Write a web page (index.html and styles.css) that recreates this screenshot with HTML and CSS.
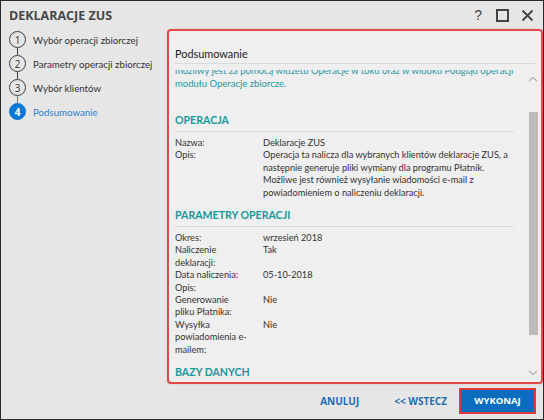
FILE: index.html
```html
<!DOCTYPE html>
<html lang="pl">
<head>
<meta charset="utf-8">
<title>Deklaracje ZUS</title>
<link rel="stylesheet" href="styles.css">
</head>
<body>
<div class="window">
  <header class="titlebar">
    <h1 class="title">DEKLARACJE ZUS</h1>
    <div class="controls">
      <span class="ctl help">?</span>
      <svg class="ctl" width="13" height="13" viewBox="0 0 13 13"><rect x="1" y="1" width="11" height="11" fill="none" stroke="#444" stroke-width="2"/></svg>
      <svg class="ctl" width="13" height="13" viewBox="0 0 13 13"><path d="M1.5 1.5 L11.5 11.5 M11.5 1.5 L1.5 11.5" stroke="#444" stroke-width="1.8"/></svg>
    </div>
  </header>
  <div class="main">
    <nav class="steps">
      <div class="step"><span class="num">1</span><span class="label">Wybór operacji zbiorczej</span></div>
      <div class="link"></div>
      <div class="step"><span class="num">2</span><span class="label">Parametry operacji zbiorczej</span></div>
      <div class="link"></div>
      <div class="step"><span class="num">3</span><span class="label">Wybór klientów</span></div>
      <div class="link active"></div>
      <div class="step active"><span class="num">4</span><span class="label">Podsumowanie</span></div>
    </nav>
    <section class="panel">
      <div class="panel-head">Podsumowanie</div>
      <div class="panel-body">
        <div class="scroll">
          <div class="content">
            <p class="note">możliwy jest za pomocą widżetu Operacje w toku oraz w widoku Podgląd operacji modułu Operacje zbiorcze.</p>
            <h2 class="sec">OPERACJA</h2>
            <div class="row"><span class="k">Nazwa:</span><span class="v">Deklaracje ZUS</span></div>
            <div class="row"><span class="k">Opis:</span><span class="v">Operacja ta nalicza dla wybranych klientów deklaracje ZUS, a następnie generuje pliki wymiany dla programu Płatnik. Możliwe jest również wysyłanie wiadomości e-mail z powiadomieniem o naliczeniu deklaracji.</span></div>
            <h2 class="sec">PARAMETRY OPERACJI</h2>
            <div class="row"><span class="k">Okres:</span><span class="v">wrzesień 2018</span></div>
            <div class="row"><span class="k">Naliczenie deklaracji:</span><span class="v">Tak</span></div>
            <div class="row"><span class="k">Data naliczenia:</span><span class="v">05-10-2018</span></div>
            <div class="row"><span class="k">Opis:</span><span class="v"></span></div>
            <div class="row"><span class="k">Generowanie <span class="nw">pliku Płatnika:</span></span><span class="v">Nie</span></div>
            <div class="row"><span class="k">Wysyłka powiadomienia e-mailem:</span><span class="v">Nie</span></div>
            <h2 class="sec">BAZY DANYCH</h2>
          </div>
        </div>
        <div class="scrollbar">
          <svg class="arrow" width="10" height="6" viewBox="0 0 10 6"><path d="M1 5 L5 1.5 L9 5" fill="none" stroke="#b5b5b5" stroke-width="1.2"/></svg>
          <div class="track"><div class="thumb"></div></div>
          <svg class="arrow" width="10" height="6" viewBox="0 0 10 6"><path d="M1 1 L5 4.5 L9 1" fill="none" stroke="#b5b5b5" stroke-width="1.2"/></svg>
        </div>
      </div>
    </section>
  </div>
  <footer class="footer">
    <button class="btn link-btn">ANULUJ</button>
    <button class="btn link-btn">&lt;&lt; WSTECZ</button>
    <button class="btn primary">WYKONAJ</button>
  </footer>
</div>
</body>
</html>
```

FILE: styles.css
```css
* { box-sizing: border-box; }
html, body { margin: 0; padding: 0; }
body {
  width: 544px;
  height: 420px;
  font-family: "Lato", "Open Sans", sans-serif;
  font-size: 10px;
  color: #333;
  background: #e6e6e6;
}
.window {
  width: 544px;
  height: 420px;
  border: 1px solid #2a2a2a;
  background: #e6e6e6;
  display: flex;
  flex-direction: column;
}
.titlebar {
  height: 28px;
  display: flex;
  align-items: center;
  justify-content: space-between;
  padding: 0 9px 0 8px;
}
.title {
  margin: 0;
  font-family: "Open Sans", sans-serif;
  font-size: 12.5px;
  font-weight: 700;
  color: #474747;
}
.controls {
  display: flex;
  align-items: center;
  gap: 12px;
}
.help {
  font-size: 14px;
  color: #444;
  line-height: 13px;
  font-family: "Liberation Sans", sans-serif;
  margin-right: 2px;
}
.main {
  flex: 1;
  display: flex;
  min-height: 0;
}
.steps {
  width: 166px;
  padding: 2px 0 0 8px;
  display: flex;
  flex-direction: column;
}
.step {
  display: flex;
  align-items: center;
  height: 17px;
}
.num {
  width: 17px;
  height: 17px;
  border: 1.3px solid #3a3a3a;
  border-radius: 50%;
  display: flex;
  align-items: center;
  justify-content: center;
  font-family: "Open Sans", sans-serif;
  font-size: 10px;
  color: #333;
  flex: none;
}
.label {
  margin-left: 7px;
  font-size: 9.7px;
  color: #333;
  white-space: nowrap;
}
.link {
  width: 1px;
  height: 7px;
  background: #3a3a3a;
  margin-left: 8px;
}
.link.active { background: #2c8ad8; }
.step.active .num {
  background: #0a78d4;
  border-color: #0a78d4;
  color: #fff;
  font-weight: 700;
}
.step.active .label { color: #2b82cf; }
.panel {
  width: 376px;
  height: 355px;
  border: 2px solid #e34b4b;
  border-radius: 4px;
  background: #efefef;
  box-shadow: 0 0 2px rgba(0,0,0,0.15);
  display: flex;
  flex-direction: column;
}
.panel-head {
  height: 33px;
  flex: none;
  margin: 0 6px;
  padding: 16px 0 0 0;
  font-size: 10.9px;
  line-height: 13px;
  color: #222;
  border-bottom: 1px solid #d9d9d9;
}
.panel-body {
  flex: 1;
  display: flex;
  min-height: 0;
}
.scroll {
  flex: 1;
  overflow: hidden;
  margin-top: 6px;
  padding-left: 6px;
}
.content {
  width: 339px;
  margin-top: -6px;
}
.nw { white-space: nowrap; }
.note {
  margin: 0 0 23px 0;
  color: #2596a0;
  font-size: 9.5px;
  line-height: 13px;
}
.sec {
  margin: 0 0 5px 0;
  padding-bottom: 4px;
  border-bottom: 1px solid #d9d9d9;
  font-size: 10.6px;
  font-weight: 700;
  color: #17999b;
  line-height: 14px;
}
.row {
  display: flex;
  line-height: 12.4px;
  font-size: 9.2px;
  color: #333;
}
.k {
  width: 88px;
  flex: none;
  padding-right: 6px;
}
.v { flex: 1; }
.row + .sec { margin-top: 9px; }
.scrollbar {
  width: 15px;
  flex: none;
  display: flex;
  flex-direction: column;
  align-items: center;
  padding: 12px 1px 6px 0;
}
.arrow { flex: none; }
.track {
  flex: 1;
  width: 9px;
  padding: 30px 0 35px 0;
  display: flex;
}
.thumb {
  flex: 1;
  background: #bcbcbc;
}
.footer {
  height: 37px;
  flex: none;
  display: flex;
  align-items: center;
  justify-content: flex-end;
  padding-right: 7px;
}
.btn {
  font-family: "Open Sans", sans-serif;
  font-weight: 700;
  font-size: 9.5px;
  border: none;
  background: transparent;
  cursor: pointer;
}
.link-btn {
  color: #1f6cb4;
  font-size: 10px;
  padding: 0;
  margin-right: 35px;
}
.link-btn + .link-btn { margin-right: 12px; }
.primary {
  width: 77px;
  height: 26px;
  background: #0b6dbd;
  color: #fff;
  border: 2px solid #e03a3a;
}
```
